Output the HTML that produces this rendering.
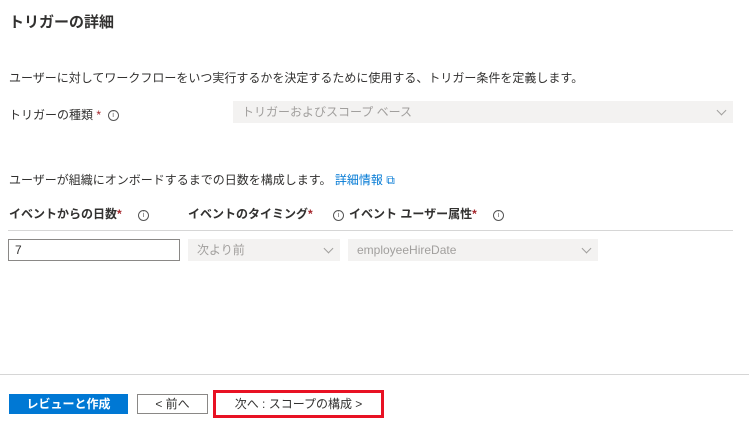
<!DOCTYPE html>
<html><head><meta charset="utf-8"><style>
body{margin:0;width:749px;height:426px;background:#fff;font-family:"Liberation Sans","Noto Sans CJK JP",sans-serif;color:#323130;position:relative;overflow:hidden}
.a{position:absolute;white-space:nowrap}
.t{font-size:12px}
.s{color:#a4262c}
.i{display:inline-block;width:9px;height:9px;border:1px solid #555;border-radius:50%;font-size:7px;line-height:9px;text-align:center;vertical-align:middle;color:#555}
.dd{position:absolute;background:#f3f2f1;height:22px;font-size:12px;color:#a19f9d;line-height:22px;padding-left:9px;box-sizing:border-box}
.ch{position:absolute;right:8px;top:6px;width:6px;height:6px;border-right:1px solid #a19f9d;border-bottom:1px solid #a19f9d;transform:rotate(45deg)}
.b{position:absolute;top:394px;height:20px;box-sizing:border-box;font-size:12px;text-align:center;line-height:18px}
</style></head><body>
<div class="a" style="left:9px;top:11px;font-size:15px;font-weight:bold">トリガーの詳細</div>
<div class="a t" style="left:9px;top:69px">ユーザーに対してワークフローをいつ実行するかを決定するために使用する、トリガー条件を定義します。</div>
<div class="a t" style="left:9px;top:106px">トリガーの種類 <span class="s">*</span>&nbsp; <span class="i">i</span></div>
<div class="dd" style="left:233px;top:101px;width:500px">トリガーおよびスコープ ベース<div class="ch"></div></div>
<div class="a t" style="left:9px;top:171px">ユーザーが組織にオンボードするまでの日数を構成します。 <span style="color:#0078d4">詳細情報 ⧉</span></div>
<div class="a t" style="left:9px;top:205px;font-weight:bold">イベントからの日数<span class="s">*</span></div>
<div class="a" style="left:138px;top:207px"><span class="i">i</span></div>
<div class="a t" style="left:188px;top:205px;font-weight:bold">イベントのタイミング<span class="s">*</span></div>
<div class="a" style="left:333px;top:207px"><span class="i">i</span></div>
<div class="a t" style="left:349px;top:205px;font-weight:bold">イベント ユーザー属性<span class="s">*</span></div>
<div class="a" style="left:493px;top:207px"><span class="i">i</span></div>
<div class="a" style="left:8px;top:230px;width:725px;height:1px;background:#d6d6d6"></div>
<div class="a t" style="left:8px;top:239px;width:172px;height:22px;border:1px solid #8a8886;box-sizing:border-box;line-height:20px;padding-left:6px">7</div>
<div class="dd" style="left:188px;top:239px;width:152px">次より前<div class="ch"></div></div>
<div class="dd" style="left:348px;top:239px;width:250px">employeeHireDate<div class="ch"></div></div>
<div class="a" style="left:0;top:374px;width:749px;height:1px;background:#d6d6d6"></div>
<div class="b" style="left:9px;width:119px;background:#0078d4;color:#fff;font-weight:bold;line-height:20px">レビューと作成</div>
<div class="b" style="left:137px;width:71px;border:1px solid #8a8886">&lt; 前へ</div>
<div class="a" style="left:213px;top:390px;width:171px;height:28px;border:3px solid #e81123;box-sizing:border-box"></div>
<div class="b" style="left:218px;width:161px;line-height:20px">次へ : スコープの構成 &gt;</div>
</body></html>
